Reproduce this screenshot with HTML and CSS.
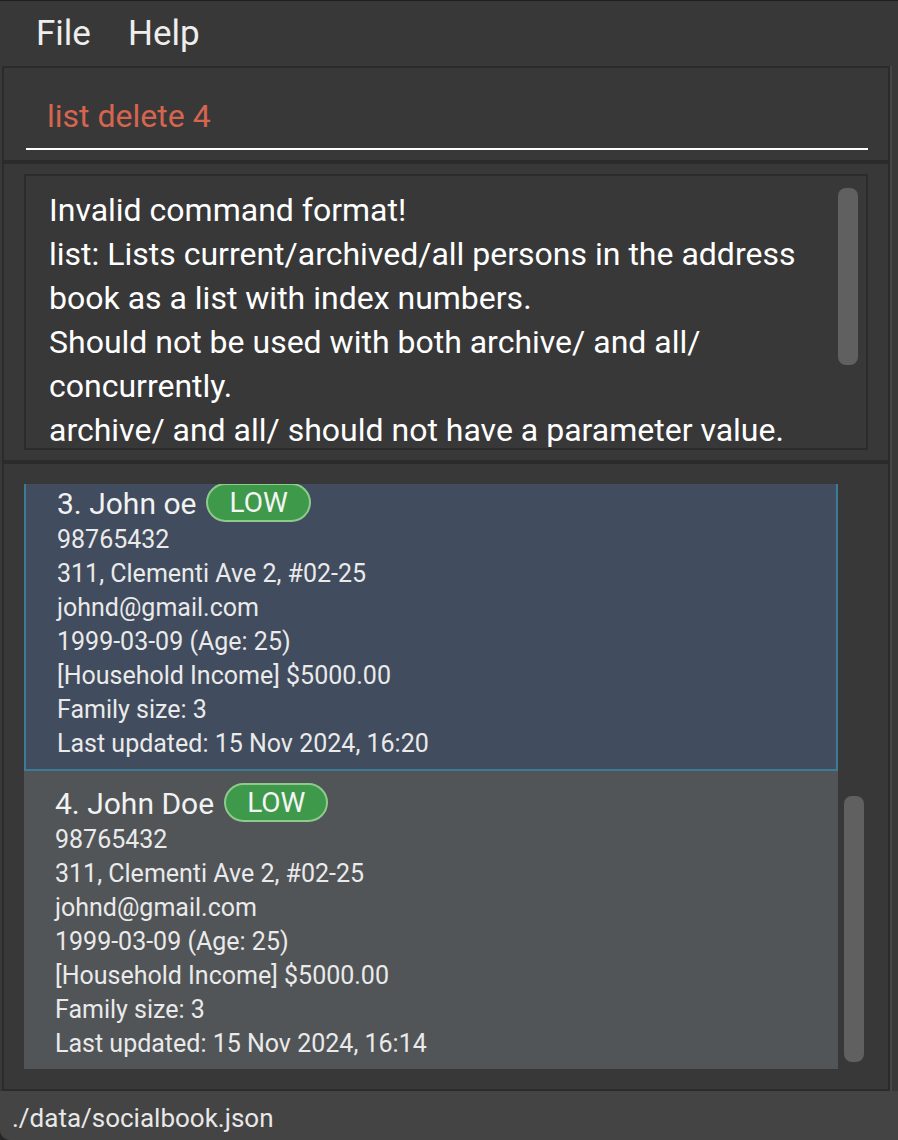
FILE: index.html
```html
<!DOCTYPE html>
<html lang="en">
<head>
<meta charset="utf-8">
<title>SocialBook</title>
<link rel="stylesheet" href="styles.css">
</head>
<body>
<div class="window">
  <div class="menubar">
    <span class="menu-item">File</span>
    <span class="menu-item">Help</span>
  </div>
  <div class="main">
    <section class="panel command-panel">
      <div class="command-field">list delete 4</div>
    </section>
    <section class="panel result-panel">
      <div class="result-box">
        <div class="result-text">Invalid command format!<br>list: Lists current/archived/all persons in the address<br>book as a list with index numbers.<br>Should not be used with both archive/ and all/<br>concurrently.<br>archive/ and all/ should not have a parameter value.</div>
        <div class="result-scroll"><div class="thumb result-thumb"></div></div>
      </div>
    </section>
    <section class="panel list-panel">
      <div class="list-viewport">
        <div class="list-inner">
          <article class="card card-selected">
            <div class="card-name-row"><span class="card-name">3. John oe</span><span class="badge">LOW</span></div>
            <div class="card-details">
              <div class="card-line">98765432</div>
              <div class="card-line">311, Clementi Ave 2, #02-25</div>
              <div class="card-line">johnd@gmail.com</div>
              <div class="card-line">1999-03-09 (Age: 25)</div>
              <div class="card-line">[Household Income] $5000.00</div>
              <div class="card-line">Family size: 3</div>
              <div class="card-line">Last updated: 15 Nov 2024, 16:20</div>
            </div>
          </article>
          <article class="card">
            <div class="card-name-row"><span class="card-name">4. John Doe</span><span class="badge">LOW</span></div>
            <div class="card-details">
              <div class="card-line">98765432</div>
              <div class="card-line">311, Clementi Ave 2, #02-25</div>
              <div class="card-line">johnd@gmail.com</div>
              <div class="card-line">1999-03-09 (Age: 25)</div>
              <div class="card-line">[Household Income] $5000.00</div>
              <div class="card-line">Family size: 3</div>
              <div class="card-line">Last updated: 15 Nov 2024, 16:14</div>
            </div>
          </article>
        </div>
      </div>
      <div class="list-scroll"><div class="thumb list-thumb"></div></div>
    </section>
  </div>
  <footer class="status">./data/socialbook.json</footer>
</div>
</body>
</html>
```
FILE: styles.css
```css
html, body {
  margin: 0;
  padding: 0;
  background: #262626;
}
body {
  width: 898px;
  height: 1140px;
  overflow: hidden;
  font-family: Roboto, "Liberation Sans", sans-serif;
}
.window {
  width: 898px;
  height: 1140px;
  box-sizing: border-box;
  background: #383838;
  border-top: 1px solid #1f1f1f;
  border-bottom-left-radius: 10px;
  overflow: hidden;
  display: flex;
  flex-direction: column;
}
.menubar {
  height: 65px;
  display: flex;
  align-items: center;
  gap: 37px;
  padding-left: 36px;
  flex: none;
}
.menu-item {
  color: #eeeeee;
  font-size: 35px;
  line-height: 65px;
}
.main {
  margin: 0 6px 0 2px;
  border-right: 2px solid #464646;
  display: flex;
  flex-direction: column;
  flex: none;
}
.panel {
  border: 2px solid #2b2b2b;
  background: #383838;
}
.command-panel {
  padding: 26px 20px 10px 22px;
}
.command-field {
  color: #d6654f;
  font-size: 32px;
  line-height: 44px;
  padding: 0 0 10px 21px;
  border-bottom: 2px solid #ffffff;
}
.result-panel {
  padding: 10px 20px;
}
.result-box {
  height: 276px;
  box-sizing: border-box;
  border: 2px solid #2b2b2b;
  display: flex;
  overflow: hidden;
}
.result-text {
  flex: 1;
  color: #ffffff;
  font-size: 32px;
  line-height: 44px;
  padding: 12px 0 0 23px;
  white-space: nowrap;
}
.result-scroll {
  width: 20px;
  margin: 12px 8px 0 0;
}
.thumb {
  background: #606060;
  border-radius: 8px;
  width: 20px;
}
.result-thumb {
  height: 177px;
}
.list-panel {
  padding: 20px 24px 20px 20px;
  display: flex;
  gap: 6px;
}
.list-viewport {
  width: 814px;
  height: 585px;
  overflow: hidden;
}
.list-inner {
  margin-top: -15px;
  display: flex;
  flex-direction: column;
}
.card {
  background: #515558;
  padding: 11px 0 8px 31px;
  color: #eaeaea;
}
.card-selected {
  background: #414c5e;
  border: 2px solid #3b7b95;
}
.card-name-row {
  height: 40px;
  display: flex;
  align-items: center;
  gap: 10px;
}
.card-name {
  font-size: 30px;
  color: #f2f2f2;
  padding-top: 2px;
}
.badge {
  box-sizing: border-box;
  height: 39px;
  padding: 0 21px;
  border: 2px solid #8ccb8c;
  background: #3f994a;
  border-radius: 20px;
  color: #f4f4f4;
  font-size: 28px;
  line-height: 35px;
}
.card-details {
  padding-top: 1px;
}
.card-line {
  font-size: 25px;
  line-height: 34px;
}
.list-scroll {
  width: 20px;
  padding-top: 312px;
}
.list-thumb {
  height: 266px;
}
.status {
  flex: 1;
  background: #444444;
  color: #e8e8e8;
  font-size: 26px;
  line-height: 43px;
  padding: 6px 0 0 12px;
}
```
